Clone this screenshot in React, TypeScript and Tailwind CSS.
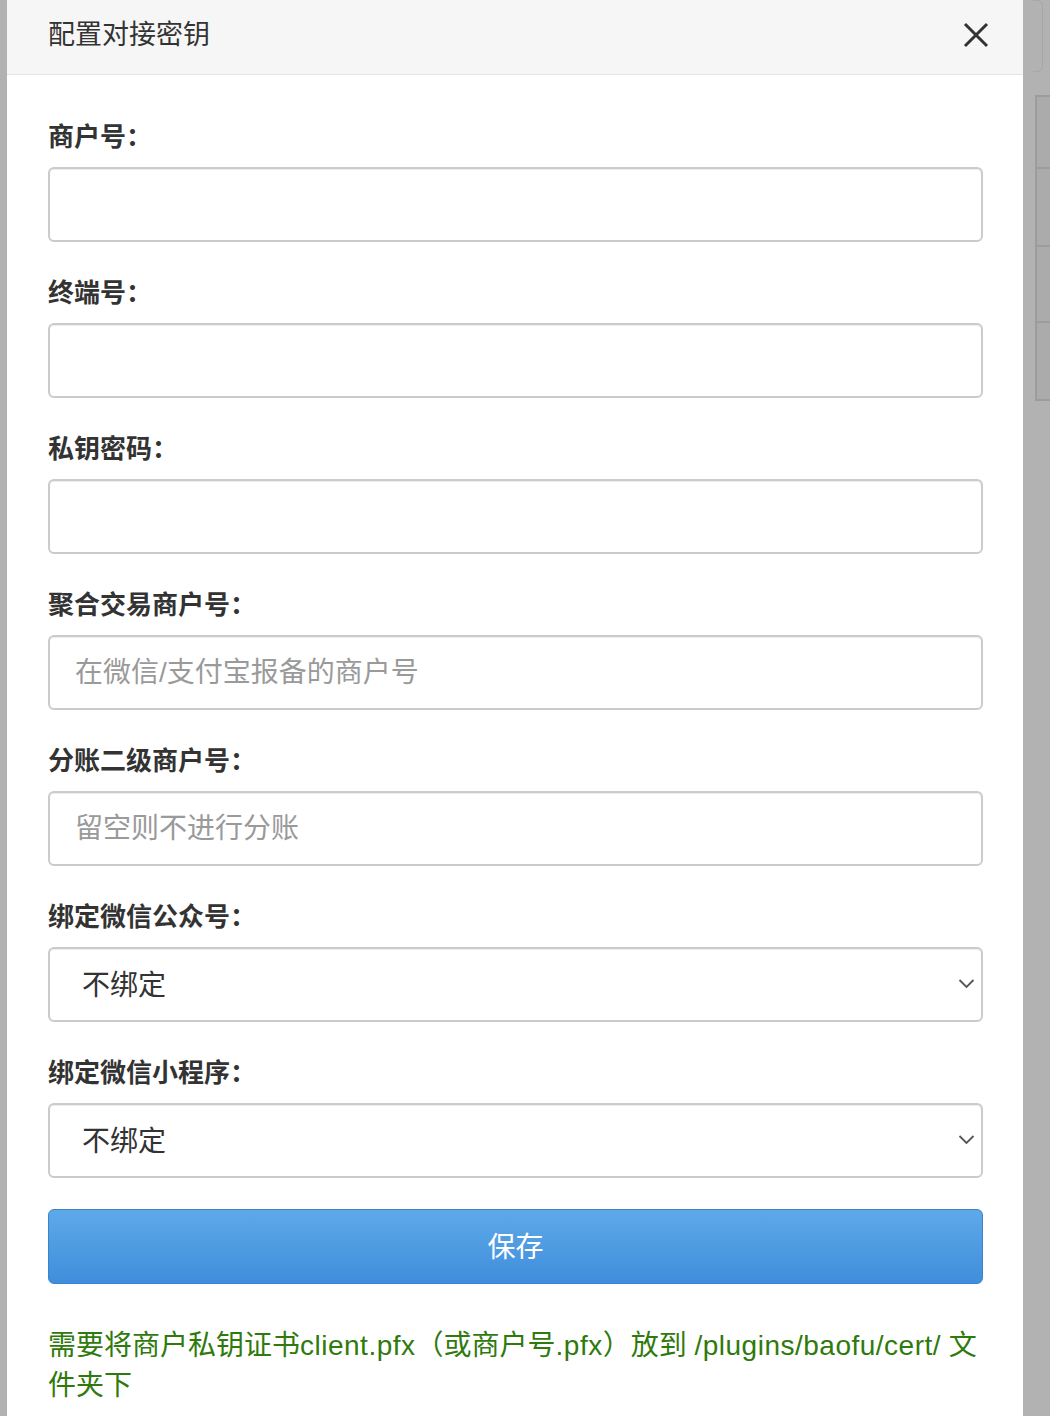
import { ChangeEvent, useState } from "react";

const font = { fontFamily: '"Liberation Sans", "Noto Sans CJK SC", sans-serif' };

function Field({ label, placeholder }: { label: string; placeholder?: string }) {
  const [value, setValue] = useState("");
  return (
    <div className="mb-[31px]">
      <label className="block text-[26px] leading-[36px] font-bold text-[#333] pt-[2px] mb-[12px]">{label}：</label>
      <input
        value={value}
        onChange={(e: ChangeEvent<HTMLInputElement>) => setValue(e.target.value)}
        placeholder={placeholder}
        className="block w-full h-[75px] rounded-[6px] border-2 border-[#cbcbcb] bg-white px-[25px] text-[28px] text-[#333] placeholder:text-[#9a9a9a] shadow-[inset_0_1px_1px_rgba(0,0,0,0.075)] outline-none"
      />
    </div>
  );
}

function SelectField({ label }: { label: string }) {
  return (
    <div className="mb-[31px]">
      <label className="block text-[26px] leading-[36px] font-bold text-[#333] pt-[2px] mb-[12px]">{label}：</label>
      <div className="relative">
        <select className="block w-full h-[75px] appearance-none rounded-[6px] border-2 border-[#cbcbcb] bg-white pl-[32px] pt-[3px] text-[28px] text-[#333] shadow-[inset_0_1px_1px_rgba(0,0,0,0.075)] outline-none">
          <option>不绑定</option>
        </select>
        <svg
          className="pointer-events-none absolute right-[8px] top-[31px]"
          width="17"
          height="11"
          viewBox="0 0 17 11"
          fill="none"
        >
          <path d="M1.5 2 L8.5 9 L15.5 2" stroke="#555" strokeWidth="1.8" />
        </svg>
      </div>
    </div>
  );
}

export default function App() {
  return (
    <div className="flex w-[1050px] h-[1416px] overflow-hidden bg-[#b2b2b2]" style={font}>
      <div className="w-[7px] shrink-0" />

      <div className="w-[1016px] shrink-0 h-full bg-white">
        <div className="flex h-[75px] items-center justify-between border-b border-[#e5e5e5] bg-[#f6f6f6] pl-[41px] pr-[34px] pb-[4px]">
          <h4 className="text-[27px] font-normal text-[#333]">配置对接密钥</h4>
          <button className="text-[#333]">
            <svg width="26" height="26" viewBox="0 0 26 26" fill="none">
              <path d="M2 2 L24 24 M24 2 L2 24" stroke="#333" strokeWidth="3" />
            </svg>
          </button>
        </div>

        <div className="pl-[41px] pr-[40px] pt-[42px]">
          <Field label="商户号" />
          <Field label="终端号" />
          <Field label="私钥密码" />
          <Field label="聚合交易商户号" placeholder="在微信/支付宝报备的商户号" />
          <Field label="分账二级商户号" placeholder="留空则不进行分账" />
          <SelectField label="绑定微信公众号" />
          <SelectField label="绑定微信小程序" />

          <button className="block w-full h-[75px] rounded-[6px] border border-[#3b82cf] bg-gradient-to-b from-[#5ea9e8] to-[#3f8edc] pt-[2px] text-[28px] text-white">
            保存
          </button>

          <p className="mt-[42px] text-[28px] leading-[40px] text-[#2f7a0c]">
            需要将商户私钥证书<span className="tracking-[0.5px]">client.pfx</span>（或商户号
            <span className="tracking-[0.5px]">.pfx</span>）放到{" "}
            <span className="tracking-[0.5px]">/plugins/baofu/cert/</span> 文件夹下
          </p>
        </div>
      </div>

      <div className="flex-1 pt-0 pl-[10px]">
        <div className="h-[72px] w-[10px] rounded-r-[6px] border border-[#a6a6a6] border-l-0" />
        <div className="mt-[23px] ml-[2px] border-l-2 border-t-2 border-b-2 border-[#9c9c9c] bg-[#ababab]">
          <div className="h-[72px] border-b-2 border-[#9c9c9c]" />
          <div className="h-[78px] border-b-2 border-[#9c9c9c]" />
          <div className="h-[76px] border-b-2 border-[#9c9c9c]" />
          <div className="h-[76px]" />
        </div>
      </div>
    </div>
  );
}
